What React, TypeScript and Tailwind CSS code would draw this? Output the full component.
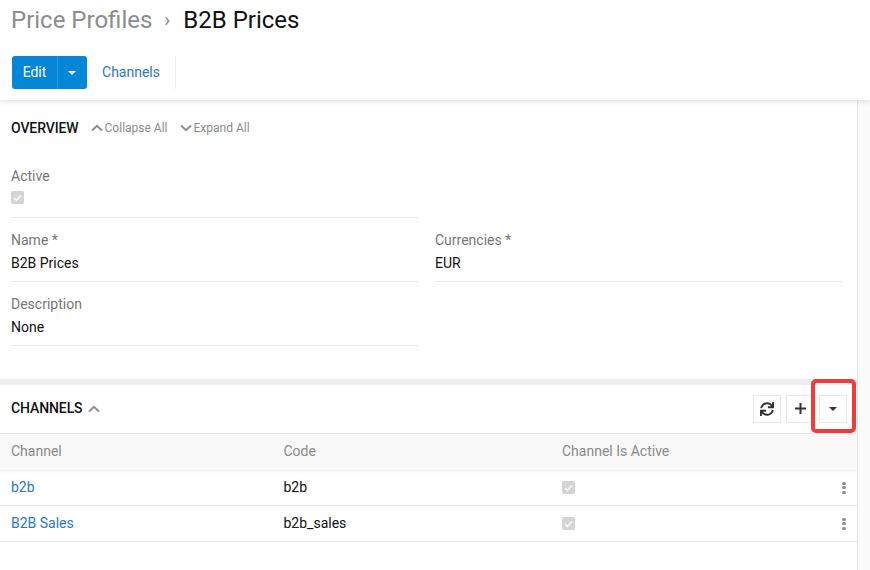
import React from "react";
import { FaSync } from "react-icons/fa";

function Chevron({ up, className = "" }: { up: boolean; className?: string }) {
  return (
    <svg width="12" height="8" viewBox="0 0 12 8" fill="none" className={className}>
      <path d={up ? "M1 6.5 L6 1.8 L11 6.5" : "M1 1.5 L6 6.2 L11 1.5"} stroke="#8a8f94" strokeWidth="2" />
    </svg>
  );
}

function Caret({ color }: { color: string }) {
  return (
    <svg width="8" height="4" viewBox="0 0 8 4">
      <path d="M0 0 H8 L4 4 Z" fill={color} />
    </svg>
  );
}

function Check() {
  return (
    <span className="flex h-[13px] w-[13px] items-center justify-center rounded-[2px] bg-[#d4d4d4]">
      <svg width="9" height="8" viewBox="0 0 9 8" fill="none">
        <path d="M1 4 L3.4 6.4 L8 1.4" stroke="#f4f4f4" strokeWidth="1.8" />
      </svg>
    </span>
  );
}

function Field({ label, value, className = "" }: { label: string; value: string; className?: string }) {
  return (
    <div className={`h-[55px] border-b border-[#ebebeb] ${className}`}>
      <div className="h-[26px] pt-[3px] leading-[20px] text-[#777]">{label}</div>
      <div className="leading-[20px] text-[#111]">{value}</div>
    </div>
  );
}

function IconBtn({ children }: { children: React.ReactNode }) {
  return (
    <div className="flex h-[28px] w-[28px] items-center justify-center border border-[#e8e8e8] bg-white">
      {children}
    </div>
  );
}

function Row({ a, b }: { a: string; b: string }) {
  return (
    <div className="flex h-[36px] items-center border-b border-[#e6e6e6] pl-[11px] pr-[11px]">
      <div className="w-[272.5px] text-[#2a78c9]">{a}</div>
      <div className="w-[278.5px] text-[#111]">{b}</div>
      <div className="flex-1">
        <Check />
      </div>
      <div className="flex flex-col gap-[1.5px]">
        <span className="h-[3px] w-[4px] rounded-full bg-[#8f8f8f]" />
        <span className="h-[3px] w-[4px] rounded-full bg-[#8f8f8f]" />
        <span className="h-[3px] w-[4px] rounded-full bg-[#8f8f8f]" />
      </div>
    </div>
  );
}

export default function App() {
  return (
    <div className="relative h-[570px] w-[870px] overflow-hidden bg-white text-[14px] [font-family:Roboto,sans-serif]">
      <div className="relative z-10 h-[100px] bg-white shadow-[0_1px_6px_rgba(0,0,0,0.14)]">
        <div className="flex h-[40px] items-center pl-[11px] text-[24px] leading-[40px]">
          <span className="text-[#8c8c8c]">Price Profiles</span>
          <span className="ml-[12px] mr-[13px] text-[20px] text-[#8c8c8c]">›</span>
          <span className="text-[#111]">B2B Prices</span>
        </div>
        <div className="mt-[16px] flex h-[33px] items-center pl-[12px]">
          <div className="flex h-[33px] w-[75px] rounded-[3px] bg-[#0586d7] text-white">
            <div className="flex w-[46px] items-center justify-center border-r border-[#2f9be0]">Edit</div>
            <div className="flex flex-1 items-center justify-center pr-[1px]">
              <Caret color="#ffffff" />
            </div>
          </div>
          <div className="flex h-[33px] w-[89px] items-center justify-center border-r border-[#eeeeee] text-[#2a78c9]">
            Channels
          </div>
        </div>
      </div>

      <div className="flex h-[470px]">
        <div className="w-[857px]">
          <div className="h-[279px] pl-[11px] pr-[14px]">
            <div className="flex h-[56px] items-center">
              <span className="font-medium text-[#111] [letter-spacing:-0.1px]">OVERVIEW</span>
              <Chevron up className="ml-[12px] mr-[2px]" />
              <span className="text-[12px] text-[#8c8c8c]">Collapse All</span>
              <Chevron up={false} className="ml-[12px] mr-[2px]" />
              <span className="text-[12px] text-[#8c8c8c]">Expand All</span>
            </div>
            <div className="mt-[7px] h-[55px] w-[408px] border-b border-[#ebebeb]">
              <div className="h-[28px] pt-[3px] leading-[20px] text-[#777]">Active</div>
              <Check />
            </div>
            <div className="mt-[9px] grid grid-cols-[408px_408px] gap-x-[16px]">
              <Field label="Name *" value="B2B Prices" />
              <Field label="Currencies *" value="EUR" />
            </div>
            <div className="mt-[9px]">
              <Field label="Description" value="None" className="w-[408px]" />
            </div>
          </div>

          <div className="h-[6px] bg-[#eeeeee]" />

          <div className="flex h-[49px] items-center border-b border-[#e8e8e8] pb-[1px] pl-[11px] pr-[10px]">
            <span className="font-medium text-[#111] [letter-spacing:-0.1px]">CHANNELS</span>
            <Chevron up className="ml-[5px]" />
            <div className="ml-auto flex gap-[5px]">
              <IconBtn>
                <FaSync size={14} color="#333" />
              </IconBtn>
              <IconBtn>
                <svg width="11" height="11" viewBox="0 0 11 11">
                  <path d="M4.5 0h2v4.5H11v2H6.5V11h-2V6.5H0v-2h4.5z" fill="#333" />
                </svg>
              </IconBtn>
              <IconBtn>
                <Caret color="#333" />
              </IconBtn>
            </div>
          </div>

          <div className="flex h-[36px] items-center bg-[#f9f9f9] pb-[1px] pl-[11px] text-[#8a8a8a] shadow-[0_1px_3px_rgba(0,0,0,0.08)]">
            <div className="w-[272.5px]">Channel</div>
            <div className="w-[278.5px]">Code</div>
            <div>Channel Is Active</div>
          </div>
          <Row a="b2b" b="b2b" />
          <Row a="B2B Sales" b="b2b_sales" />
        </div>
        <div className="flex-1 border-l border-[#e6e6e6] bg-[#fbfbfb]" />
      </div>

      <div className="absolute left-[811px] top-[379px] h-[54px] w-[45px] rounded-[5px] border-[4px] border-[#ef3b3b]" />
    </div>
  );
}
